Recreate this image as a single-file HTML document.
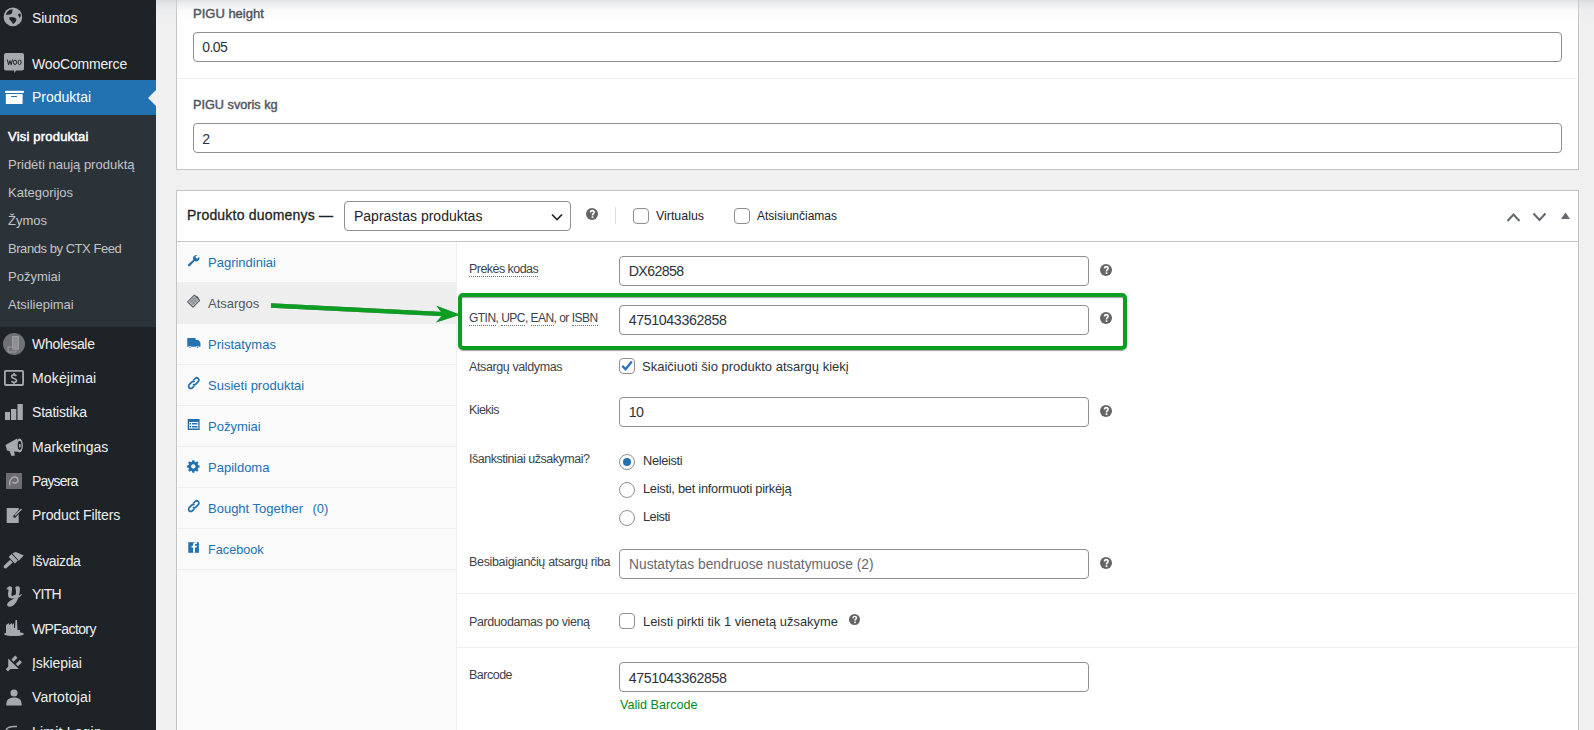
<!DOCTYPE html>
<html><head><meta charset="utf-8">
<style>
*{box-sizing:border-box;margin:0;padding:0}
html,body{width:1594px;height:730px;overflow:hidden;background:#f0f0f1;font-family:"Liberation Sans",sans-serif;position:relative}
.a{position:absolute;white-space:nowrap;line-height:1}
#side{position:absolute;left:0;top:0;width:156px;height:730px;background:#1d2327}
.mi{position:absolute;left:32px;font-size:14px;color:#f0f0f1}
.si{position:absolute;left:8px;font-size:13px;color:#c3c4c7}
.ic{position:absolute;left:0;width:28px;height:34px}
.box{position:absolute;background:#fff;border:1px solid #c3c4c7}
.inp{position:absolute;background:#fff;border:1px solid #8c8f94;border-radius:4px;height:30px}
.it{position:absolute;font-size:14px;color:#2c3338}
.lbl{position:absolute;font-size:11.4px;color:#3c434a;left:469px}
.dot{border-bottom:1px dotted #6d7277}
.help{position:absolute;width:13px;height:13px;border-radius:50%;background:#646970;color:#fff;font-size:10px;font-weight:bold;text-align:center;line-height:13px}
.cb{position:absolute;width:16px;height:16px;border:1px solid #8c8f94;border-radius:4px;background:#fff}
.rd{position:absolute;width:16px;height:16px;border:1px solid #8c8f94;border-radius:50%;background:#fff}
.tab{position:absolute;left:208px;font-size:13px;color:#2271b1}
.tabrow{position:absolute;left:177px;width:279px;height:41px;border-bottom:1px solid #eee}
.hr{position:absolute;height:1px;background:#eee}
</style></head><body>

<div id="side">

  <!-- Siuntos -->
  <div class="a mi" style="top:11px;letter-spacing:-0.2px">Siuntos</div>
  <div class="a mi" style="top:56.7px;letter-spacing:-0.18px">WooCommerce</div>
  <div style="position:absolute;left:0;top:80px;width:156px;height:35px;background:#2271b1"></div>
  <div style="position:absolute;left:148px;top:90px;width:0;height:0;border-top:8px solid transparent;border-bottom:8px solid transparent;border-right:8px solid #f0f0f1"></div>
  <div class="a mi" style="top:89.6px;color:#fff">Produktai</div>
  <div style="position:absolute;left:0;top:115px;width:156px;height:212px;background:#2c3338"></div>
  <div class="a si" style="top:130.2px;color:#fff;letter-spacing:0.2px;-webkit-text-stroke:0.5px #fff">Visi produktai</div>
  <div class="a si" style="top:158px">Pridėti naują produktą</div>
  <div class="a si" style="top:186px">Kategorijos</div>
  <div class="a si" style="top:214px">Žymos</div>
  <div class="a si" style="top:242px;letter-spacing:-0.45px">Brands by CTX Feed</div>
  <div class="a si" style="top:270px">Požymiai</div>
  <div class="a si" style="top:298px">Atsiliepimai</div>
  <div class="a mi" style="top:337px;letter-spacing:-0.3px">Wholesale</div>
  <div class="a mi" style="top:371px;letter-spacing:0.15px">Mokėjimai</div>
  <div class="a mi" style="top:405.3px;letter-spacing:-0.2px">Statistika</div>
  <div class="a mi" style="top:440px">Marketingas</div>
  <div class="a mi" style="top:474px;letter-spacing:-0.85px">Paysera</div>
  <div class="a mi" style="top:508px;letter-spacing:-0.14px">Product Filters</div>
  <div class="a mi" style="top:553.5px;letter-spacing:-0.35px">Išvaizda</div>
  <div class="a mi" style="top:587px;letter-spacing:-0.75px">YITH</div>
  <div class="a mi" style="top:621.7px;letter-spacing:-0.6px">WPFactory</div>
  <div class="a mi" style="top:656.2px;letter-spacing:-0.1px">Įskiepiai</div>
  <div class="a mi" style="top:690px;letter-spacing:0.1px">Vartotojai</div>
  <div class="a mi" style="top:724.8px;letter-spacing:0.2px">Limit Login</div>
  <!-- sidebar icons -->
  <svg class="a" style="left:0;top:0" width="30" height="730" viewBox="0 0 30 730">
    <g fill="#a7aaad">
      <!-- globe -->
      <circle cx="12.9" cy="16.9" r="9.3"/>
      <path d="M5.8 14.4 C6.8 12 8.5 10.2 10.5 9.4 L12.7 9.5 C12.5 11 12.1 12.6 11.5 14 C9.8 14.4 7.8 15 5.8 14.4 Z M9.2 17.6 C11.5 16.4 14.6 16.9 16.5 19 C16.4 21.2 14.6 23.2 13 24 C12 22.2 11.4 20.6 9.7 19.9 Z M18 14.5 C18.9 13.4 20 13.3 20.6 13.9 C20.9 15.4 20.6 17.1 19.9 17.9 C19 17.1 18.4 15.6 18 14.5 Z" fill="#1d2327"/>
      <!-- woo -->
      <path d="M6 53 H22 A2 2 0 0 1 24 55 V68.5 A2 2 0 0 1 22 70.5 H16 L14.5 73 L14 70.5 H6 A2 2 0 0 1 4 68.5 V55 A2 2 0 0 1 6 53 Z"/>
    </g>
    <path d="M7.3 59.5 L8.6 64.8 L9.9 60.6 L11.2 64.8 L12.5 59.5" fill="none" stroke="#1d2327" stroke-width="1"/><ellipse cx="15" cy="62.3" rx="1.6" ry="2.2" fill="none" stroke="#1d2327" stroke-width="1"/><ellipse cx="19.6" cy="62.3" rx="1.6" ry="2.2" fill="none" stroke="#1d2327" stroke-width="1"/>
    <g fill="#fff">
      <rect x="5" y="90.8" width="18.8" height="2.2"/>
      <path d="M5.8 94 H22.6 V104.1 H5.8 Z M11 96.1 V97.1 H17 V96.1 Z" fill-rule="evenodd"/>
    </g>
    <g fill="#a7aaad">
      <!-- wholesale -->
      <circle cx="14" cy="344" r="11" fill="#6f7174"/>
      <path d="M12 336 H19 V350 H12 Z" fill="#8c8f93"/>
      <path d="M8 347 H16 V352 H8 Z" fill="none" stroke="#9b9ea1" stroke-width="1"/>
      <path d="M12.5 336.5 H18.5 V349 M12.5 336.5 V347" fill="none" stroke="#9b9ea1" stroke-width="1"/>
      <!-- mokejimai -->
      <rect x="4.9" y="370.9" width="18.2" height="14.1" rx="0.8" fill="none" stroke="#a7aaad" stroke-width="1.8"/>
    </g>
    <path d="M16.4 375.9 C15.8 375.2 15 374.9 14 374.9 C12.6 374.9 11.7 375.6 11.7 376.7 C11.7 379.1 16.5 378 16.5 380.6 C16.5 381.7 15.5 382.3 14 382.3 C13 382.3 12 382 11.4 381.3 M14 373 V375 M14 382.2 V384" fill="none" stroke="#a7aaad" stroke-width="1.7"/>
    <g fill="#a7aaad">
      <!-- statistika -->
      <rect x="5" y="412" width="5" height="8"/>
      <rect x="11" y="409" width="5.3" height="11"/>
      <rect x="17.5" y="404" width="5.3" height="16"/>
      <!-- megaphone -->
      <path d="M5.5 445 L17 438.5 L21 452 L14 451.5 L15 455.5 L11.5 456 L9.5 451 L7 450.5 Z"/>
      <ellipse cx="19.5" cy="445.5" rx="3.4" ry="7" fill="#a7aaad"/>
      <ellipse cx="19.6" cy="445.5" rx="1.9" ry="4.4" fill="#1d2327"/><ellipse cx="19.8" cy="445.8" rx="0.9" ry="2" fill="#a7aaad"/>
      <!-- paysera -->
      <rect x="6" y="473" width="16" height="16" fill="#6b6d70"/>
      <path d="M10 485.5 C9 483 10 478 13.5 477 C17 476.5 18.5 479 18 481 C17.5 483 14.5 484 12.5 482" fill="none" stroke="#b5b7b9" stroke-width="1.3"/>
      <!-- product filters -->
      <rect x="6.7" y="508" width="12" height="15"/>
      <path d="M13.5 515.5 L21 507.5 L23 509.5 L15.5 517.5 L13.5 517.8 Z" fill="#1d2327"/>
      <path d="M14.5 515 L21 508.5 L22 509.5 L15.5 516 Z" fill="#a7aaad"/>
      <!-- brush -->
      <path d="M12.3 553.2 L15.8 552 L23.8 555.6 L18.6 560.8 Z M8.6 557 L11.6 554 L17.9 560.6 L14.9 563.5 Z M10 559.8 L12.8 562.6 L6.6 568 C5.6 568.9 4.3 568.6 3.9 567.8 C3.4 567 3.7 566 4.4 565.3 Z"/>
      <path d="M11.9 553.9 L18.2 560.3" stroke="#1d2327" stroke-width="0.7"/>
    </g>
    <path fill="#a7aaad" d="M6.2 589.5 C7 587.5 8.5 586.2 10.5 586.3 C12 586.5 12.4 588 12 590 L11.4 594.3 C11.3 595.8 12.2 596.3 13.5 595.6 L16.5 594 L16.3 597.2 C14 598.8 9 599.2 8.2 596.2 C7.8 594.5 8.3 592 8.5 590.3 C8.6 589.2 7.5 588.8 6.2 589.5 Z M15.3 587.5 C16.3 586.2 18.8 585.9 19.6 587.2 C20.2 588.3 19.9 592 18.9 595.5 C20 594.8 21.2 593.8 22.2 594.3 C21.2 595.8 19.9 596.7 18.4 597.7 C16.9 601.7 13.9 606.8 9.5 606.8 C7.3 606.8 6.6 605 7.4 603.4 C8.5 601.3 12 599.5 15.2 598 C16.2 595 16.5 591 15.3 587.5 Z"/>
    <g fill="#a7aaad">
      <!-- wpfactory -->
      <ellipse cx="14" cy="634" rx="10" ry="2"/>
      <path d="M6 634 V625 L9 623 V625 L12 623 V625 L14 623 V628 L15 628 L15.5 620 L17 620 L17.5 630 L20 630 V634 Z"/>
      <!-- plug -->
      <path d="M8.2 658.6 L18.8 669 L8.2 669 Z M5.8 669.2 L8.4 666.6 L10.6 668.8 L8 671.4 Z M11.4 659.6 L15.2 655.6 L17.5 657.8 L13.6 661.8 Z M15.8 664 L19.7 660 L22 662.2 L18 666.2 Z"/>
      <!-- user -->
      <circle cx="14" cy="693" r="3.6"/>
      <path d="M6.2 705.5 C6.2 699.5 9 697.5 14 697.5 C19 697.5 21.7 699.5 21.7 705.5 Z"/>
      <!-- limit login -->
      <path d="M6 730 C7 727.5 11 726 17 726.5" fill="none" stroke="#a7aaad" stroke-width="1.5"/>
    </g>
  </svg>
</div>

<!-- top box -->
<div class="box" style="left:176px;top:-10px;width:1403px;height:180px"></div>
<div style="position:absolute;left:156px;top:0;width:1438px;height:22px;background:linear-gradient(rgba(200,202,206,.55) 0px,rgba(210,212,215,.4) 4px,rgba(225,227,229,.2) 10px,rgba(255,255,255,0) 22px)"></div>
<div class="a" style="left:193px;top:6.8px;font-size:13px;color:#50575e;-webkit-text-stroke:0.45px #50575e">PIGU height</div>
<div class="inp" style="left:193px;top:32px;width:1369px"></div>
<div class="a it" style="left:202.3px;top:40px;font-size:14px;letter-spacing:-0.55px">0.05</div>
<div class="hr" style="left:177px;top:78px;width:1401px"></div>
<div class="a" style="left:193px;top:99.3px;font-size:12.7px;color:#50575e;-webkit-text-stroke:0.45px #50575e">PIGU svoris kg</div>
<div class="inp" style="left:193px;top:123px;width:1369px"></div>
<div class="a it" style="left:202.3px;top:132px;font-size:14px">2</div>

<!-- product data box -->
<div class="box" style="left:176px;top:190px;width:1403px;height:560px"></div>
<div style="position:absolute;left:177px;top:241px;width:1401px;height:1px;background:#c3c4c7"></div>
<div class="a" style="left:187px;top:208.3px;font-size:14px;letter-spacing:0.2px;color:#1d2327;-webkit-text-stroke:0.3px #1d2327">Produkto duomenys —</div>
<div class="inp" style="left:344px;top:201px;width:227px"></div>
<div class="a it" style="left:354px;top:209px;color:#1d2327">Paprastas produktas</div>


<!-- header controls -->
<svg class="a" style="left:551px;top:213px" width="12" height="8" viewBox="0 0 12 8"><path d="M1 1.5 L6 6.5 L11 1.5" fill="none" stroke="#1d2327" stroke-width="1.6"/></svg>
<svg class="a" style="left:586.3px;top:208.2px" width="12" height="12" viewBox="0 0 12 12"><circle cx="6" cy="6" r="6" fill="#646464"/><path d="M4.5 4.6 C4.5 3.3 5.2 2.6 6.3 2.6 C7.4 2.6 8.1 3.3 8.1 4.3 C8.1 5.2 7.5 5.6 7 6 C6.6 6.3 6.5 6.6 6.5 7.4" stroke="#fff" stroke-width="1.6" fill="none"/><rect x="5.6" y="8.3" width="1.8" height="1.6" fill="#fff"/></svg>
<div style="position:absolute;left:615px;top:207px;width:1px;height:17px;background:#dcdcde"></div>
<div class="cb" style="left:633px;top:208px"></div>
<div class="a" style="left:656px;top:209.6px;font-size:12.4px;color:#1d2327">Virtualus</div>
<div class="cb" style="left:734px;top:208px"></div>
<div class="a" style="left:757px;top:209.6px;font-size:12px;color:#1d2327">Atsisiunčiamas</div>
<svg class="a" style="left:1506px;top:211px" width="15" height="12" viewBox="0 0 15 12"><path d="M1.5 10 L7.5 3.5 L13.5 10" fill="none" stroke="#646970" stroke-width="2"/></svg>
<svg class="a" style="left:1532px;top:211px" width="15" height="12" viewBox="0 0 15 12"><path d="M1.5 2.5 L7.5 9 L13.5 2.5" fill="none" stroke="#646970" stroke-width="2"/></svg>
<svg class="a" style="left:1561px;top:212px" width="9" height="8" viewBox="0 0 9 8"><path d="M0 7 L4.5 0.5 L9 7 Z" fill="#646970"/></svg>

<!-- tabs column -->
<div style="position:absolute;left:177px;top:242px;width:280px;height:488px;background:#fafafa;border-right:1px solid #eee"></div>
<div class="tabrow" style="top:242px"></div>
<div class="tabrow" style="top:282px;height:42px;background:#eee"></div>
<div class="tabrow" style="top:324px"></div>
<div class="tabrow" style="top:365px"></div>
<div class="tabrow" style="top:406px"></div>
<div class="tabrow" style="top:447px"></div>
<div class="tabrow" style="top:488px"></div>
<div class="tabrow" style="top:529px"></div>
<div class="a tab" style="top:256px">Pagrindiniai</div>
<div class="a tab" style="top:297px;color:#50575e">Atsargos</div>
<div class="a tab" style="top:338px">Pristatymas</div>
<div class="a tab" style="top:379px">Susieti produktai</div>
<div class="a tab" style="top:420px">Požymiai</div>
<div class="a tab" style="top:461px">Papildoma</div>
<div class="a tab" style="top:502px">Bought Together</div><div class="a tab" style="top:502px;left:312.5px">(0)</div>
<div class="a tab" style="top:543.8px;font-size:12.7px">Facebook</div>


<!-- tab icons -->
<svg class="a" style="left:180px;top:245px" width="30" height="320" viewBox="180 245 30 320">
  <g fill="#2271b1">
    <!-- wrench -->
    <path d="M196.5 255 C194.5 255 193 256.5 193 258.5 C193 259 193.1 259.4 193.3 259.8 L188.3 264.3 C187.8 264.8 187.8 265.6 188.3 266 C188.8 266.5 189.5 266.5 190 266 L194.6 261.1 C195 261.3 195.5 261.4 196 261.4 C198 261.4 199.5 259.9 199.5 257.9 C199.5 257.5 199.4 257.1 199.3 256.8 L197.5 258.5 L196 258 L195.5 256.5 L197.3 255 C197 255 196.8 255 196.5 255 Z"/>
    <!-- truck -->
    <path d="M187.3 337.9 H195.6 V340 H198.4 L200.4 342.4 V346.8 H187.3 Z"/>
    <circle cx="190" cy="347.3" r="1.3" fill="#fafafa"/><circle cx="197.5" cy="347.3" r="1.3" fill="#fafafa"/>
    <circle cx="190" cy="347.3" r="0.7"/><circle cx="197.5" cy="347.3" r="0.7"/>
  </g>
  <g fill="none" stroke="#2271b1" stroke-width="1.7">
    <!-- link -->
    <path d="M193.2 380.5 L195.2 378.5 C196 377.7 197.5 377.7 198.3 378.5 C199.1 379.3 199.1 380.8 198.3 381.6 L195.8 384.1 C195 384.9 193.8 384.9 193 384.3"/>
    <path d="M194.3 385.8 L192.3 387.8 C191.5 388.6 190 388.6 189.2 387.8 C188.4 387 188.4 385.5 189.2 384.7 L191.7 382.2 C192.5 381.4 193.7 381.4 194.5 382"/>
    <path d="M193.2 503.5 L195.2 501.5 C196 500.7 197.5 500.7 198.3 501.5 C199.1 502.3 199.1 503.8 198.3 504.6 L195.8 507.1 C195 507.9 193.8 507.9 193 507.3"/>
    <path d="M194.3 508.8 L192.3 510.8 C191.5 511.6 190 511.6 189.2 510.8 C188.4 510 188.4 508.5 189.2 507.7 L191.7 505.2 C192.5 504.4 193.7 504.4 194.5 505"/>
  </g>
  <g fill="#2271b1">
    <!-- attributes card -->
    <path d="M187.7 419 H199.6 V430 H187.7 Z M189 422 V428.5 H198.3 V422 Z" fill-rule="evenodd"/>
    <rect x="189.5" y="423" width="1.5" height="1.5"/><rect x="192" y="423" width="5.5" height="1.5"/>
    <rect x="189.5" y="426" width="1.5" height="1.5"/><rect x="192" y="426" width="5.5" height="1.5"/>
    <!-- gear -->
    <path d="M192.3 460.2 H194.3 L194.6 461.7 L195.8 462.2 L197.1 461.3 L198.5 462.7 L197.6 464 L198.1 465.2 L199.6 465.5 V467.5 L198.1 467.8 L197.6 469 L198.5 470.3 L197.1 471.7 L195.8 470.8 L194.6 471.3 L194.3 472.8 H192.3 L192 471.3 L190.8 470.8 L189.5 471.7 L188.1 470.3 L189 469 L188.5 467.8 L187 467.5 V465.5 L188.5 465.2 L189 464 L188.1 462.7 L189.5 461.3 L190.8 462.2 L192 461.7 Z M193.3 464.3 A2.2 2.2 0 1 0 193.31 464.3 Z" fill-rule="evenodd"/>
    <!-- facebook -->
    <rect x="188.3" y="542.2" width="10.6" height="10.6"/>
  </g>
  <path d="M195 552.8 V547.5 H196.6 L196.9 545.7 H195 V544.7 C195 544.2 195.2 543.9 195.9 543.9 H197 V542.3 C196.7 542.3 196.2 542.2 195.5 542.2 C194 542.2 193.1 543 193.1 544.5 V545.7 H191.5 V547.5 H193.1 V552.8 Z" fill="#fafafa"/>
  <!-- inventory -->
  <g transform="rotate(45 193.8 301)">
    <rect x="190" y="296.4" width="7.6" height="9.6" fill="none" stroke="#50575e" stroke-width="1.1" rx="0.4"/>
    <rect x="190.6" y="297.1" width="6.4" height="8.2" fill="#a9adb1"/>
    <path d="M192.7 297.1 V305.3 M194.9 297.1 V305.3 M190.6 299.8 H197 M190.6 302.6 H197" stroke="#6c7176" stroke-width="0.5"/>
    <rect x="192.3" y="295.2" width="3" height="1.6" fill="#50575e"/>
  </g>
</svg>

<!-- panel fields -->
<div class="a lbl" style="top:262.68px;font-size:12.5px;letter-spacing:-0.55px"><span class="dot">Prekės kodas</span></div>
<div class="inp" style="left:619px;top:256px;width:470px"></div>
<div class="a it" style="left:628.7px;top:263.9px;font-size:14.2px;letter-spacing:-0.6px">DX62858</div>
<svg class="a" style="left:1099.9px;top:263.5px" width="12" height="12" viewBox="0 0 12 12"><circle cx="6" cy="6" r="6" fill="#646464"/><path d="M4.5 4.6 C4.5 3.3 5.2 2.6 6.3 2.6 C7.4 2.6 8.1 3.3 8.1 4.3 C8.1 5.2 7.5 5.6 7 6 C6.6 6.3 6.5 6.6 6.5 7.4" stroke="#fff" stroke-width="1.6" fill="none"/><rect x="5.6" y="8.3" width="1.8" height="1.6" fill="#fff"/></svg>

<div class="a lbl" style="top:311.65px;font-size:12px;letter-spacing:-0.53px"><span class="dot">GTIN</span>, <span class="dot">UPC</span>, <span class="dot">EAN</span>, or <span class="dot">ISBN</span></div>
<div class="inp" style="left:619px;top:305px;width:470px"></div>
<div class="a it" style="left:628.7px;top:313.1px;font-size:14.2px;letter-spacing:-0.36px">4751043362858</div>
<svg class="a" style="left:1099.9px;top:312.4px" width="12" height="12" viewBox="0 0 12 12"><circle cx="6" cy="6" r="6" fill="#646464"/><path d="M4.5 4.6 C4.5 3.3 5.2 2.6 6.3 2.6 C7.4 2.6 8.1 3.3 8.1 4.3 C8.1 5.2 7.5 5.6 7 6 C6.6 6.3 6.5 6.6 6.5 7.4" stroke="#fff" stroke-width="1.6" fill="none"/><rect x="5.6" y="8.3" width="1.8" height="1.6" fill="#fff"/></svg>

<div class="a lbl" style="top:361.02px;font-size:12.5px;letter-spacing:-0.39px">Atsargų valdymas</div>
<div class="cb" style="left:619px;top:358px"></div>
<svg class="a" style="left:620px;top:359px" width="14" height="14" viewBox="0 0 14 14"><path d="M2.3 6.9 L5.5 10.2 L11.8 2.6" fill="none" stroke="#2a72c2" stroke-width="2.3"/></svg>
<div class="a" style="left:642px;top:359.7px;font-size:13px;color:#2c3338">Skaičiuoti šio produkto atsargų kiekį</div>

<div class="a lbl" style="top:404.1px;font-size:12.5px;letter-spacing:-0.58px">Kiekis</div>
<div class="inp" style="left:619px;top:397px;width:470px"></div>
<div class="a it" style="left:628.7px;top:405px;font-size:14.2px;letter-spacing:-0.5px">10</div>
<svg class="a" style="left:1099.9px;top:404.5px" width="12" height="12" viewBox="0 0 12 12"><circle cx="6" cy="6" r="6" fill="#646464"/><path d="M4.5 4.6 C4.5 3.3 5.2 2.6 6.3 2.6 C7.4 2.6 8.1 3.3 8.1 4.3 C8.1 5.2 7.5 5.6 7 6 C6.6 6.3 6.5 6.6 6.5 7.4" stroke="#fff" stroke-width="1.6" fill="none"/><rect x="5.6" y="8.3" width="1.8" height="1.6" fill="#fff"/></svg>

<div class="a lbl" style="top:453.47px;font-size:12.5px;letter-spacing:-0.47px">Išankstiniai užsakymai?</div>
<div class="rd" style="left:619px;top:454px"></div>
<div style="position:absolute;left:623px;top:458px;width:8px;height:8px;border-radius:50%;background:#2271b1"></div>
<div class="a" style="left:643px;top:455.02px;font-size:12.8px;letter-spacing:-0.34px;color:#2c3338">Neleisti</div>
<div class="rd" style="left:619px;top:482px"></div>
<div class="a" style="left:643px;top:483.02px;font-size:12.8px;letter-spacing:-0.25px;color:#2c3338">Leisti, bet informuoti pirkėją</div>
<div class="rd" style="left:619px;top:510px"></div>
<div class="a" style="left:643px;top:511.02px;font-size:12.8px;letter-spacing:-0.52px;color:#2c3338">Leisti</div>

<div class="a lbl" style="top:556.02px;font-size:12.5px;letter-spacing:-0.33px">Besibaigiančių atsargų riba</div>
<div class="inp" style="left:619px;top:549px;width:470px"></div>
<div class="a it" style="left:629px;top:558px;font-size:13.8px;color:#646970">Nustatytas bendruose nustatymuose (2)</div>
<svg class="a" style="left:1099.9px;top:556.5px" width="12" height="12" viewBox="0 0 12 12"><circle cx="6" cy="6" r="6" fill="#646464"/><path d="M4.5 4.6 C4.5 3.3 5.2 2.6 6.3 2.6 C7.4 2.6 8.1 3.3 8.1 4.3 C8.1 5.2 7.5 5.6 7 6 C6.6 6.3 6.5 6.6 6.5 7.4" stroke="#fff" stroke-width="1.6" fill="none"/><rect x="5.6" y="8.3" width="1.8" height="1.6" fill="#fff"/></svg>

<div class="hr" style="left:457px;top:593px;width:1121px"></div>
<div class="a lbl" style="top:616.02px;font-size:12.5px;letter-spacing:-0.4px">Parduodamas po vieną</div>
<div class="cb" style="left:619px;top:613px"></div>
<div class="a" style="left:643px;top:616.3px;font-size:12.9px;color:#2c3338">Leisti pirkti tik 1 vienetą užsakyme</div>
<svg class="a" style="left:848.8px;top:614.4px" width="11" height="11" viewBox="0 0 12 12"><circle cx="6" cy="6" r="6" fill="#646464"/><path d="M4.5 4.6 C4.5 3.3 5.2 2.6 6.3 2.6 C7.4 2.6 8.1 3.3 8.1 4.3 C8.1 5.2 7.5 5.6 7 6 C6.6 6.3 6.5 6.6 6.5 7.4" stroke="#fff" stroke-width="1.6" fill="none"/><rect x="5.6" y="8.3" width="1.8" height="1.6" fill="#fff"/></svg>
<div class="hr" style="left:457px;top:647px;width:1121px"></div>

<div class="a lbl" style="top:668.85px;font-size:12.5px;letter-spacing:-0.5px">Barcode</div>
<div class="inp" style="left:619px;top:662px;width:470px"></div>
<div class="a it" style="left:628.7px;top:670.5px;font-size:14.2px;letter-spacing:-0.36px">4751043362858</div>
<div class="a" style="left:620px;top:698.5px;font-size:12.6px;color:#008a20">Valid Barcode</div>

<!-- green highlight -->
<div style="position:absolute;left:458px;top:293px;width:669px;height:57px;border:4px solid #0b9e22;border-radius:5px;box-shadow:0 1px 1px rgba(60,40,60,.45), inset 0 1px 1px rgba(60,40,60,.45)"></div>
<svg class="a" style="left:260px;top:290px" width="210" height="40" viewBox="260 290 210 40"><g style="filter:drop-shadow(0 0.7px 0.4px rgba(60,40,60,.6))"><path d="M271 305.5 L444 314.2" stroke="#0b9e22" stroke-width="4.3" fill="none"/><path d="M436.5 305.8 L460 314.8 L436 322.6 L443 314.4 Z" fill="#0b9e22"/></g></svg>

</body></html>
